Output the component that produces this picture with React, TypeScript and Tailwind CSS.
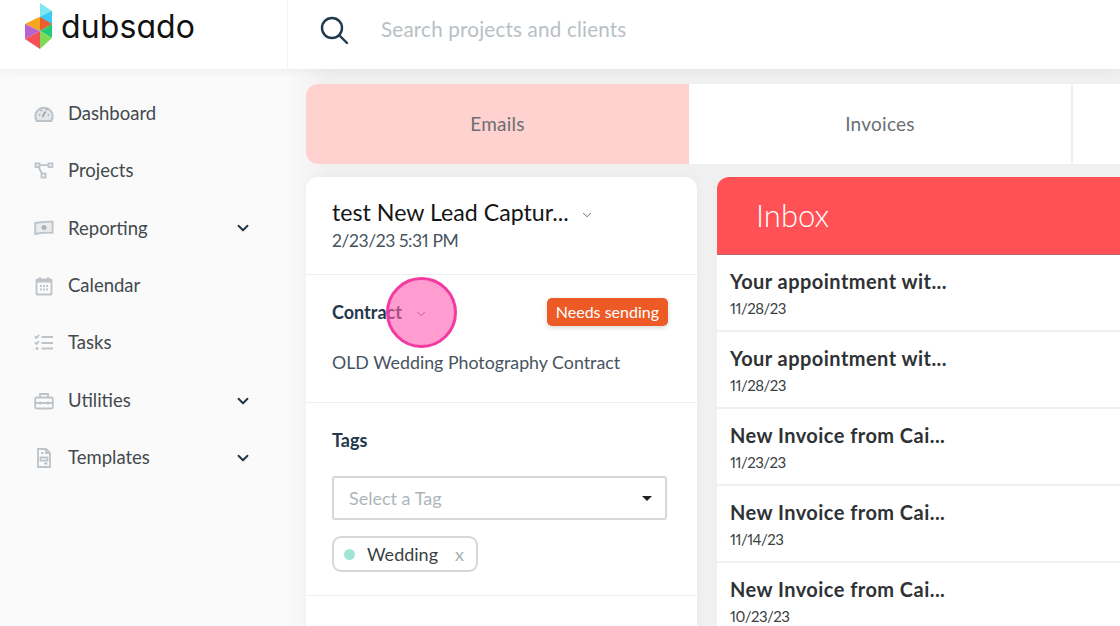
import React from "react";
import { ChevronDown } from "lucide-react";

const F = "font-['Lato','Liberation_Sans',sans-serif]";

function Logo() {
  return (
    <svg width="32" height="48" viewBox="0 0 32 48" className="shrink-0">
      <polygon points="16,0 28,8 28,21 16,14" fill="#7fe6ee" />
      <polygon points="16,14 28,8 28,21 22,24" fill="#3dc8f5" />
      <polygon points="1,21 13,15 16,14 16,28" fill="#f9a61f" />
      <polygon points="16,14 28,21 16,28" fill="#ea5f2b" />
      <polygon points="1,21 16,28 1,36" fill="#b862cf" />
      <polygon points="28,21 28,35 16,28" fill="#27c878" />
      <polygon points="1,36 16,28 16,46" fill="#f4505a" />
      <polygon points="16,28 28,35 16,46" fill="#7ed957" />
    </svg>
  );
}

const NavIcon = ({ name }: { name: string }) => {
  const p = { fill: "none", stroke: "#bcc3c9", strokeWidth: 1.8 };
  return (
    <svg width="20" height="20" viewBox="0 0 20 20" className="shrink-0">
      {name === "dash" && (
        <>
          <path d="M2.8 17 A8.6 8.6 0 1 1 17.2 17 Z" fill="#e4e7ea" stroke="#bcc3c9" strokeWidth="2" />
          <path d="M8.5 13 L11.5 7.5" stroke="#9aa3aa" strokeWidth="1.6" fill="none" />
          <path d="M5 11h1.3M13.7 11h1.3M6.5 6.5h1.3M12 5.5h1.3" stroke="#9aa3aa" strokeWidth="1.4" fill="none" />
        </>
      )}
      {name === "proj" && (
        <>
          <rect x="1.5" y="2.5" width="4" height="3.5" {...p} />
          <rect x="14.5" y="2.5" width="4" height="3.5" {...p} />
          <rect x="7.5" y="12.5" width="4" height="4" {...p} />
          <path d="M5.5 4.2h9M4.5 6l3.5 6.5" {...p} />
        </>
      )}
      {name === "rep" && (
        <>
          <path d="M1.2 5 Q10 3.5 18.6 3.6 V14.8 Q10 14 1.2 16 Z" fill="#e9ebed" stroke="#bcc3c9" strokeWidth="1.8" />
          <circle cx="10" cy="9.5" r="2.5" fill="#aab2b9" />
        </>
      )}
      {name === "cal" && (
        <>
          <rect x="2.5" y="3.5" width="15" height="15" rx="1" {...p} />
          <rect x="2.5" y="3" width="15" height="3.5" fill="#bcc3c9" />
          <path d="M6 1v3M14 1v3" {...p} />
          <path d="M6 10h1.8M9.1 10h1.8M12.2 10h1.8M6 13.5h1.8M9.1 13.5h1.8M12.2 13.5h1.8" {...p} />
        </>
      )}
      {name === "task" && (
        <>
          <path d="M1 3.5l1.4 1.4L5 2M1 9.5l1.4 1.4L5 8" {...p} />
          <circle cx="3" cy="15.5" r="1.5" fill="#bcc3c9" />
          <path d="M7.5 4h11.5M7.5 10h11.5M7.5 15.5h11.5" {...p} />
        </>
      )}
      {name === "util" && (
        <>
          <rect x="1.2" y="6.5" width="17.6" height="11" rx="1.5" {...p} />
          <path d="M6 6.5V3h8v3.5M1.2 12h17.6M6 10.5v3M14 10.5v3" {...p} />
        </>
      )}
      {name === "tpl" && (
        <>
          <path d="M4 1h8l4 4V19H4Z" {...p} />
          <path d="M12 1v4h4M7 5h2.5M6.5 9.5h7v3.2h-7ZM10 15.5h3.5" {...p} />
        </>
      )}
    </svg>
  );
};

const nav = [
  ["Dashboard", "dash", false],
  ["Projects", "proj", false],
  ["Reporting", "rep", true],
  ["Calendar", "cal", false],
  ["Tasks", "task", false],
  ["Utilities", "util", true],
  ["Templates", "tpl", true],
] as const;

const inbox = [
  ["Your appointment wit...", "11/28/23"],
  ["Your appointment wit...", "11/28/23"],
  ["New Invoice from Cai...", "11/23/23"],
  ["New Invoice from Cai...", "11/14/23"],
  ["New Invoice from Cai...", "10/23/23"],
];

export default function App() {
  return (
    <div className={`${F} w-[1120px] h-[626px] overflow-hidden bg-[#f0f0f0] flex flex-col`}>
      <header className="h-[69px] shrink-0 bg-white flex items-stretch shadow-[0_2px_10px_rgba(0,0,0,0.05)] relative z-10">
        <div className="w-[288px] shrink-0 flex items-start pl-[24px] pt-[3px] gap-[5px] border-r border-[#f2f2f2]">
          <Logo />
          <span className="font-['Inter',sans-serif] [font-feature-settings:'cv11'] text-[32px] leading-[48px] text-[#111] tracking-[0.1px]">dubsado</span>
        </div>
        <div className="flex items-center pl-[31px] pb-[9px] gap-[32px]">
          <svg width="30" height="30" viewBox="0 0 30 30" fill="none" stroke="#1f3a4d" strokeWidth="2.4" strokeLinecap="round">
            <circle cx="13" cy="13" r="10" />
            <path d="M20.5 20.5 L28 28" />
          </svg>
          <span className="text-[20.6px] text-[#b8c0c5] tracking-[0.2px] mb-[1px]">Search projects and clients</span>
        </div>
      </header>
      <div className="flex flex-1 min-h-0 bg-[linear-gradient(90deg,#fafafa_0,#fafafa_287px,#f0f0f0_330px)]">
        <aside className="w-[287px] shrink-0 pt-[16px] pl-[34px] pr-[35px]">
          {nav.map(([label, icon, chev]) => (
            <div key={label} className="h-[57.4px] flex items-center gap-[14px]">
              <NavIcon name={icon} />
              <span className="flex-1 text-[18.5px] text-[#43494d]">{label}</span>
              {chev && <ChevronDown size={18} strokeWidth={2.5} color="#1f3347" />}
            </div>
          ))}
        </aside>
        <main className="flex-1 min-w-0 pl-[19px] pt-[15px] overflow-hidden">
          <div className="flex h-[80px] w-[900px] rounded-l-[12px] overflow-hidden bg-white text-[19px] text-[#6a6f73] tracking-[0.25px]">
            <div className="w-[383px] bg-[#ffd2d0] flex items-center justify-center">Emails</div>
            <div className="w-[384px] border-r-2 border-[#efefef] flex items-center justify-center">Invoices</div>
          </div>
          <div className="flex gap-[20px] mt-[13px] items-start">
            <section className="w-[391px] shrink-0 bg-white rounded-t-[12px] shadow-[0_0_8px_rgba(0,0,0,0.04)]">
              <div className="h-[98px] px-[26px] pt-[21px] border-b border-[#efefef]">
                <div className="flex items-center gap-[11px] text-[23.2px] leading-[28px] text-[#151515]">
                  test New Lead Captur...
                  <ChevronDown size={14} strokeWidth={1.5} color="#46535f" className="mt-[6px]" />
                </div>
                <div className="text-[17.5px] leading-[28px] text-[#46535f] mt-[1px] proportional-nums tracking-[-0.4px]">2/23/23 5:31 PM</div>
              </div>
              <div className="h-[128px] px-[26px] border-b border-[#efefef] relative">
                <div className="flex items-center justify-between pt-[23px] pr-[3px]">
                  <div className="flex items-center gap-[12px]">
                    <span className="text-[18px] font-bold text-[#24374b]">Contract</span>
                    <ChevronDown size={14} strokeWidth={1.5} color="#46535f" className="mt-[3px]" />
                  </div>
                  <span className="h-[28px] px-[9px] rounded-[5px] bg-[#ee5a26] text-white text-[16px] flex items-center shadow-[0_2px_5px_rgba(0,0,0,0.15)]">Needs sending</span>
                </div>
                <div className="text-[17.8px] text-[#46535f] mt-[24px] leading-[24px]">OLD Wedding Photography Contract</div>
                <div className="absolute left-[80px] top-[2px] w-[71px] h-[71px] rounded-full bg-[#ff5cb0]/60 border-[3px] border-[#f33aa0]" />
              </div>
              <div className="h-[193px] px-[26px] pt-[25px] border-b border-[#efefef]">
                <div className="text-[18px] leading-[24px] font-bold text-[#24374b]">Tags</div>
                <div className="mt-[24px] h-[44px] w-[335px] border-2 border-[#d5d7d9] rounded-[3px] flex items-center justify-between pl-[15px] pr-[13px] text-[18px] text-[#adb5ba]">
                  Select a Tag
                  <span className="w-0 h-0 border-x-[5px] border-x-transparent border-t-[5px] border-t-[#222]" />
                </div>
                <div className="mt-[16px] h-[36px] w-[146px] border-2 border-[#d5d7d9] rounded-[9px] flex items-center pl-[10px] text-[18px] text-[#3a3f44]">
                  <span className="w-[11px] h-[11px] rounded-full bg-[#a3e4d9] mr-[12px]" />
                  Wedding
                  <span className="ml-[17px] text-[#a8afb4]">x</span>
                </div>
              </div>
              <div className="h-[40px]" />
            </section>
            <section className="w-[420px] shrink-0 bg-white rounded-t-[12px]">
              <div className="h-[78px] bg-[#ff5156] rounded-t-[12px] border-b border-[#b5686b] flex items-center pl-[39px] text-white text-[31px] font-light">Inbox</div>
              {inbox.map(([t, d], i) => (
                <div key={i} className="h-[77px] pl-[13px] pt-[13px] border-b-2 border-[#efefef]">
                  <div className="text-[20px] leading-[26px] font-bold text-[#2f3235] tracking-[0.45px]">{t}</div>
                  <div className="text-[15px] leading-[24px] text-[#3a3f44] mt-[2px] proportional-nums tracking-[-0.5px]">{d}</div>
                </div>
              ))}
            </section>
          </div>
        </main>
      </div>
    </div>
  );
}
